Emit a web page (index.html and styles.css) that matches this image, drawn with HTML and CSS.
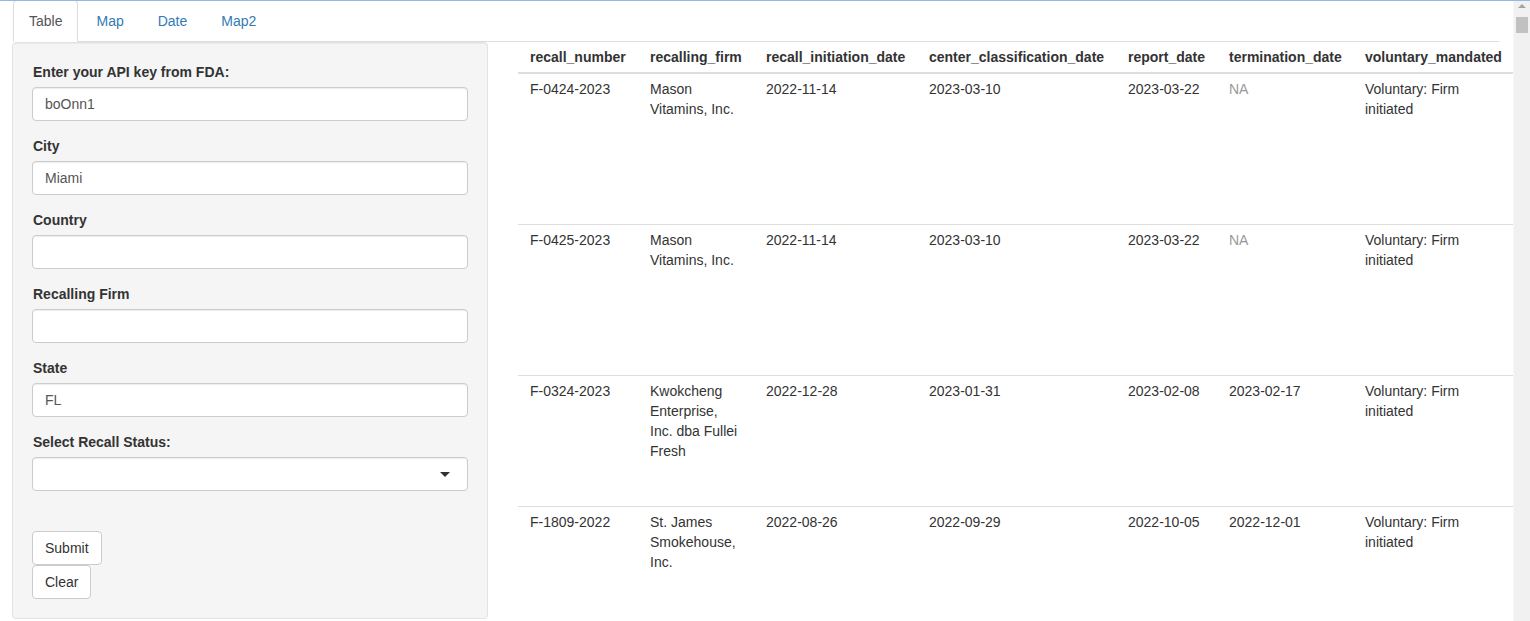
FILE: index.html
```html
<!DOCTYPE html>
<html lang="en">
<head>
<meta charset="utf-8">
<title>FDA Recalls</title>
<link rel="stylesheet" href="styles.css">
</head>
<body>
<div class="focus-line"></div>
<div class="page">
  <ul class="nav-tabs">
    <li class="active"><a>Table</a></li>
    <li><a>Map</a></li>
    <li><a>Date</a></li>
    <li><a>Map2</a></li>
  </ul>
  <div class="tab-content">
    <div class="well">
      <div class="form-group">
        <label>Enter your API key from FDA:</label>
        <input class="form-control" type="text" value="boOnn1">
      </div>
      <div class="form-group">
        <label>City</label>
        <input class="form-control" type="text" value="Miami">
      </div>
      <div class="form-group">
        <label>Country</label>
        <input class="form-control" type="text" value="">
      </div>
      <div class="form-group">
        <label>Recalling Firm</label>
        <input class="form-control" type="text" value="">
      </div>
      <div class="form-group">
        <label>State</label>
        <input class="form-control" type="text" value="FL">
      </div>
      <div class="form-group">
        <label>Select Recall Status:</label>
        <div class="selectize"><span class="caret"></span></div>
      </div>
      <div class="actions">
        <button class="btn">Submit</button>
        <button class="btn">Clear</button>
      </div>
    </div>
    <div class="main">
      <table class="recalls">
        <colgroup>
          <col class="c-num"><col class="c-firm"><col class="c-init"><col class="c-class"><col class="c-report"><col class="c-term"><col class="c-vol">
        </colgroup>
        <thead>
          <tr>
            <th>recall_number</th>
            <th>recalling_firm</th>
            <th>recall_initiation_date</th>
            <th>center_classification_date</th>
            <th>report_date</th>
            <th>termination_date</th>
            <th>voluntary_mandated</th>
          </tr>
        </thead>
        <tbody>
          <tr class="lines-7">
            <td>F-0424-2023</td><td>Mason Vitamins, Inc.</td><td>2022-11-14</td><td>2023-03-10</td><td>2023-03-22</td><td class="na">NA</td><td>Voluntary: Firm initiated</td>
          </tr>
          <tr class="lines-7">
            <td>F-0425-2023</td><td>Mason Vitamins, Inc.</td><td>2022-11-14</td><td>2023-03-10</td><td>2023-03-22</td><td class="na">NA</td><td>Voluntary: Firm initiated</td>
          </tr>
          <tr class="lines-6">
            <td>F-0324-2023</td><td>Kwokcheng Enterprise, Inc. dba Fullei Fresh</td><td>2022-12-28</td><td>2023-01-31</td><td>2023-02-08</td><td>2023-02-17</td><td>Voluntary: Firm initiated</td>
          </tr>
          <tr class="lines-7">
            <td>F-1809-2022</td><td>St. James Smokehouse, Inc.</td><td>2022-08-26</td><td>2022-09-29</td><td>2022-10-05</td><td>2022-12-01</td><td>Voluntary: Firm initiated</td>
          </tr>
        </tbody>
      </table>
    </div>
  </div>
</div>
<div class="scrollbar">
  <div class="sb-arrow"></div>
  <div class="sb-thumb"></div>
</div>
</body>
</html>
```

FILE: styles.css
```css
* { box-sizing: border-box; }
html, body { height: 100%; }
body {
  margin: 0;
  display: flex;
  overflow: hidden;
  font-family: "Liberation Sans", Arial, Helvetica, sans-serif;
  font-size: 14px;
  line-height: 20px;
  color: #333;
  background: #fff;
}
.focus-line {
  position: fixed;
  top: 0; left: 0; right: 0;
  height: 1px;
  background: #9ab7e3;
  z-index: 10;
}
.page {
  flex: 1;
  min-width: 0;
  overflow: hidden;
  padding: 0 14px 0 12px;
}
.nav-tabs {
  list-style: none;
  margin: 0 0 0 1px;
  padding: 0;
  display: flex;
  border-bottom: 1px solid #ddd;
}
.nav-tabs li { margin-bottom: -1px; }
.nav-tabs a {
  display: block;
  padding: 10px 15px;
  margin-right: 2px;
  border: 1px solid transparent;
  border-radius: 4px 4px 0 0;
  color: #337ab7;
  line-height: 20px;
}
.nav-tabs li.active a {
  color: #555;
  background: #fff;
  border-color: #ddd #ddd transparent;
}
.tab-content {
  display: flex;
  align-items: flex-start;
  gap: 30px;
}
.well {
  flex: none;
  width: 476px;
  padding: 19px;
  background: #f5f5f5;
  border: 1px solid #e3e3e3;
  border-radius: 4px;
  box-shadow: inset 0 1px 1px rgba(0,0,0,.05);
}
.form-group { margin-bottom: 15px; }
.form-group label {
  display: inline-block;
  margin-bottom: 5px;
  margin-left: 1px;
  font-weight: bold;
}
.form-control, .selectize {
  display: block;
  width: 100%;
  height: 34px;
  padding: 6px 12px;
  font: inherit;
  color: #555;
  background: #fff;
  border: 1px solid #ccc;
  border-radius: 4px;
  box-shadow: inset 0 1px 1px rgba(0,0,0,.075);
}
.selectize { position: relative; }
.caret {
  position: absolute;
  right: 17px;
  top: 14px;
  width: 0; height: 0;
  border-style: solid;
  border-width: 5px 5px 0 5px;
  border-color: #333 transparent transparent transparent;
}
.actions {
  margin-top: 40px;
  display: flex;
  flex-direction: column;
  align-items: flex-start;
}
.btn {
  font: inherit;
  color: #333;
  background: #fff;
  border: 1px solid #ccc;
  border-radius: 4px;
  padding: 6px 12px;
  line-height: 20px;
  height: 34px;
}
.main {
  flex: 1;
  min-width: 0;
}
.recalls {
  border-collapse: collapse;
  table-layout: fixed;
  width: 996px;
}
.c-num { width: 120px; }
.c-firm { width: 116px; }
.c-init { width: 163px; }
.c-class { width: 199px; }
.c-report { width: 101px; }
.c-term { width: 136px; }
.c-vol { width: 161px; }
.recalls th {
  text-align: left;
  white-space: nowrap;
  padding: 5px 12px;
  border-bottom: 2px solid #ddd;
  vertical-align: bottom;
}
.recalls td {
  padding: 5px 12px;
  border-top: 1px solid #ddd;
  vertical-align: top;
}
.recalls tbody tr:first-child td { border-top: 0; }
.lines-7 td { height: 151px; }
.lines-6 td { height: 131px; }
.na { color: #999; }
.scrollbar {
  flex: none;
  width: 17px;
  background: #f1f1f1;
  border-left: 1px solid #f7f7f7;
  position: relative;
  padding-top: 4px;
}
.sb-arrow {
  margin: 0 auto;
  width: 0; height: 0;
  border-style: solid;
  border-width: 0 4px 4px 4px;
  border-color: transparent transparent #a3a3a3 transparent;
}
.sb-thumb {
  margin: 9px 2px 0 2px;
  height: 16px;
  background: #c1c1c1;
}
```
